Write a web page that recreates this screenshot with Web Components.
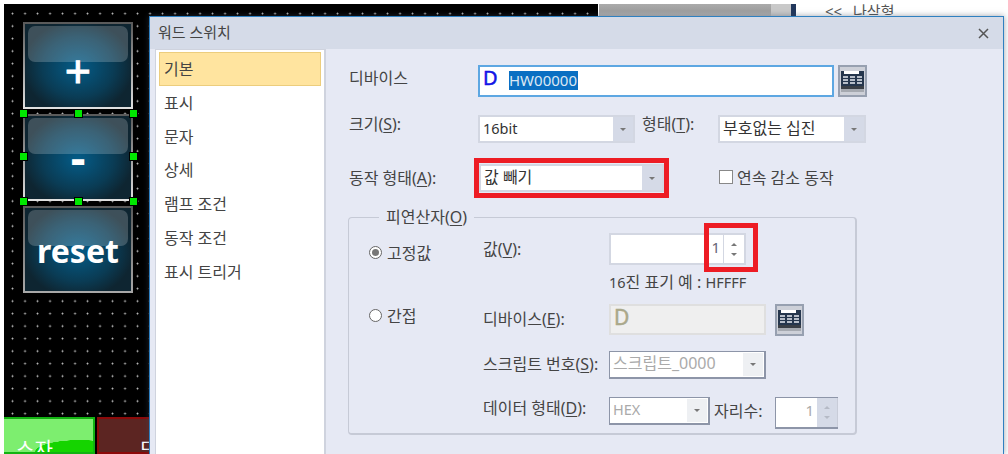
<!DOCTYPE html>
<html lang="ko">
<head>
<meta charset="utf-8">
<title>워드 스위치</title>
<style>
  html, body { margin: 0; height: 100%; background: #fff; overflow: hidden; }
  body { font: 16px "Noto Sans", "Noto Sans CJK KR", sans-serif; color: #444; }
</style>
</head>
<body>
<hmi-desktop>
  <hmi-button slot="canvas" label="+" kind="plus"></hmi-button>
  <hmi-button slot="canvas" label="-" kind="minus" selected></hmi-button>
  <hmi-button slot="canvas" label="reset" kind="word"></hmi-button>
  <word-dialog slot="window"></word-dialog>
</hmi-desktop>

<script>
const KR = '"Noto Sans", "Noto Sans CJK KR", sans-serif';

class HmiDesktop extends HTMLElement {
  constructor() {
    super();
    this.attachShadow({mode: "open"}).innerHTML = `
    <style>
      :host { display: block; position: relative; width: 1008px; height: 454px; overflow: hidden; background: #fff; font-family: ${KR}; }
      .top { display: flex; height: 454px; padding-top: 4px; box-sizing: border-box; }
      .canvas {
        margin-left: 4px; width: 594px; height: 450px; position: relative; background-color: #000;
        background-image: radial-gradient(circle at center, #c8c8c8 0 .8px, transparent 1.1px);
        background-size: 12.5px 12.5px;
        background-position: 2.3px 3.4px;
      }
      .stack { display: flex; flex-direction: column; gap: 5px; padding: 18px 0 0 19px; }
      .bar { width: 172px; height: 12px; margin-left: 1px; background: linear-gradient(#aaa, #a0a0a0 60%, #bbb); }
      .bar2 { width: 20px; height: 12px; background: #c9c9c9; }
      .navy { width: 5px; height: 12px; background: #22375c; }
      .hint { margin: -1px 0 0 29px; font-size: 15px; word-spacing: 7px; line-height: 16px; height: 12px; color: #555; overflow: hidden; white-space: nowrap; }
      .sw { position: absolute; top: 413px; height: 37px; box-sizing: border-box; overflow: hidden; color: #fff; font-size: 20px; text-align: center; }
      .go { left: 0; width: 91px; border: 2px solid #12b312; border-left: 0; background: radial-gradient(ellipse 45px 12px at 85% 100%, #15d400 98%, transparent), #7dee6f; text-align: left; padding-left: 12px; }
      .stop { left: 93px; width: 53px; border: 2px solid #8c0a0a; border-right: 0; background: #5c2522; text-align: left; padding-left: 40px; }
      .sw span { display: block; margin-top: 15px; }
      ::slotted([slot=window]) { position: absolute; left: 149px; top: 16px; }
    </style>
    <div class="top">
      <div class="canvas">
        <div class="stack"><slot name="canvas"></slot></div>
        <div class="sw go"><span>스자</span></div>
        <div class="sw stop"><span>드</span></div>
      </div>
      <div class="bar"></div><div class="bar2"></div><div class="navy"></div>
      <div class="hint">&lt;&lt; 나삭형</div>
    </div>
    <slot name="window"></slot>`;
  }
}

class HmiButton extends HTMLElement {
  constructor() {
    super();
    this.attachShadow({mode: "open"});
  }
  connectedCallback() {
    const handles = this.hasAttribute("selected")
      ? ["tl","tc","tr","ml","mr","bl","bc","br"].map(p => `<i class="${p}"></i>`).join("") : "";
    this.shadowRoot.innerHTML = `
    <style>
      :host { display: block; position: relative; width: 110px; height: 87px; box-sizing: border-box; font-family: ${KR};
        border: 2px solid; border-image: linear-gradient(#5a5a5a, #8f8f8f 40%, #e0e0e0) 1;
        background: radial-gradient(ellipse 52% 56% at 50% 52%, #045c88, #0a3c55 65%, #0e2531); }
      :host([kind=word]) { border-image: linear-gradient(#5a5a5a, #a8a8a8) 1; }
      .gloss { position: absolute; left: 3px; right: 3px; top: 2px; height: 36px; border-radius: 7px; background: rgba(255,255,255,.2); }
      .txt { position: absolute; inset: 0; display: flex; align-items: center; justify-content: center; color: #fff; box-sizing: border-box; }
      :host([kind=plus]) .txt { font: 400 46px/1 "Noto Sans", sans-serif; -webkit-text-stroke: 1px #fff; padding-top: 8px; }
      :host([kind=minus]) .txt { font: 700 46px/1 "Noto Sans", sans-serif; padding-bottom: 1px; }
      :host([kind=word]) .txt { font: 700 32px/1 "Noto Sans", sans-serif; padding-top: 3px; }
      i { position: absolute; width: 7px; height: 7px; background: #00e800; border: 1px solid #000; }
      .tl,.tr,.tc { top: -7px; } .bl,.bc,.br { bottom: -7px; } .ml,.mr { top: 36px; }
      .tl,.ml,.bl { left: -6px; } .tr,.mr,.br { right: -7px; } .tc,.bc { left: 49px; }
    </style>
    <div class="gloss"></div><div class="txt">${this.getAttribute("label")}</div>${handles}`;
  }
}

class NavList extends HTMLElement {
  constructor() {
    super();
    const items = ["기본","표시","문자","상세","램프 조건","동작 조건","표시 트리거"];
    this.attachShadow({mode: "open"}).innerHTML = `
    <style>
      :host { display: block; width: 171px; margin-left: 5px; box-sizing: border-box; background: #fff;
        border: 1px solid #cfd3de; border-width: 1px 2px 0 1px; padding: 2px 3px 0 3px; flex: none; }
      div { height: 33.8px; line-height: 34px; padding-left: 5px; box-sizing: border-box; color: #444; }
      .on { background: #ffe49f; border: 1px solid #eccd7d; padding-left: 4px; line-height: 32px; }
    </style>
    ${items.map((t, i) => `<div class="${i ? "" : "on"}">${t}</div>`).join("")}`;
  }
}

class ComboBox extends HTMLElement {
  constructor() {
    super();
    this.attachShadow({mode: "open"}).innerHTML = `
    <style>
      :host { display: flex; align-items: stretch; position: relative; box-sizing: border-box; height: 28px; flex: none;
        background: #fff; border: 2px solid #d3d7e2; color: #333; padding-left: 3px; }
      :host([disabled]) { border: 1px solid #8d95a8; border-width: 1px 2px 2px 1px; color: #aaa; }
      .v { flex: 1; line-height: 23px; white-space: nowrap; overflow: hidden; }
      .a { width: 20px; background: #d5dae7; display: flex; align-items: center; justify-content: center; }
      :host([disabled]) .a { background: #eef0f3; margin: 1px; }
      .a::after { content: ""; border: 3.5px solid transparent; border-top: 3.5px solid #777; border-bottom: 0; }
      :host([marked])::after { content: ""; position: absolute; inset: -8px -7px; border: 5px solid #ed1c24; }
    </style>
    <div class="v"><slot></slot></div><div class="a"></div>`;
  }
}

class SpinBox extends HTMLElement {
  constructor() {
    super();
    this.attachShadow({mode: "open"}).innerHTML = `
    <style>
      :host { display: flex; position: relative; box-sizing: border-box; height: 32px; flex: none; background: #fff; border: 2px solid #d3d7e2; color: #667; font-size: 15px; }
      :host([disabled]) { border: 1px solid #8d95a8; border-width: 1px 0 2px 1px; color: #aaa; }
      .v { flex: 1; text-align: right; padding-right: 3px; line-height: 24px; }
      .s { width: 21px; border-left: 1px solid #d3d7e2; display: flex; flex-direction: column; align-items: center; justify-content: space-around; padding: 4px 0; box-sizing: border-box; }
      :host([disabled]) .s { background: #d5dae7; border-left: 0; border-right: 1px solid #c8ccd8; }
      .u { border: 3.5px solid transparent; border-bottom: 3.5px solid #777; border-top: 0; }
      .d { border: 3.5px solid transparent; border-top: 3.5px solid #777; border-bottom: 0; }
      :host([disabled]) .u { border-bottom-color: #b5bac6; }
      :host([disabled]) .d { border-top-color: #b5bac6; }
      :host([marked])::after { content: ""; position: absolute; left: 93px; right: -14px; top: -12px; bottom: -9px; border: 5px solid #ed1c24; }
    </style>
    <div class="v"><slot></slot></div><div class="s"><i class="u"></i><i class="d"></i></div>`;
  }
}

class DeviceField extends HTMLElement {
  constructor() {
    super();
    this.attachShadow({mode: "open"}).innerHTML = `
    <style>
      :host { display: flex; align-items: center; box-sizing: border-box; height: 32px; background: #fff; border: 2px solid #5da7e2; flex: none; padding-left: 3px; color: #333; }
      :host([disabled]) { background: #efefef; border-color: #dfdfdf; height: 31px; }
      b { font: 400 20px/1 "Noto Sans", sans-serif; -webkit-text-stroke: .5px currentColor; color: #1414e6; width: 26px; margin-top: -6px; }
      :host([disabled]) b { color: #aaa88a; font-size: 21px; margin-top: -5px; }
      ::slotted(span) { background: #0a6fc2; color: #dbe8f4; line-height: 19px; font-size: 15px; padding-right: 1px; margin-top: -2px; }
    </style>
    <b>D</b><slot></slot>`;
  }
}

class CalcButton extends HTMLElement {
  constructor() {
    super();
    this.attachShadow({mode: "open"}).innerHTML = `
    <style>
      :host { display: flex; align-items: center; justify-content: center; box-sizing: border-box; width: 29px; height: 32px; flex: none;
        background: #cdd0d8; border: 2px solid #97a0b0; }
      svg { display: block; }
    </style>
    <svg width="23" height="24" viewBox="0 0 23 24">
      <rect x="0" y="2" width="23" height="15" fill="#25364d"/>
      <rect x="3" y="2" width="15" height="3" fill="#fff"/>
      <path d="M2 8h5M9 8h5M16 8h5M2 11h5M9 11h5M16 11h5M2 14h5M9 14h5M16 14h5" stroke="#e8ecf2" stroke-width="1.5"/>
      <rect x="0" y="17" width="23" height="3" fill="#3a3f46"/>
      <rect x="0" y="20" width="23" height="3" fill="#a5a9b0"/>
    </svg>`;
  }
}

class CheckField extends HTMLElement {
  constructor() {
    super();
    this.attachShadow({mode: "open"}).innerHTML = `
    <style>
      :host { display: flex; align-items: center; gap: 4px; white-space: nowrap; }
      i { width: 12px; height: 12px; background: #fff; border: 1px solid #888; }
    </style>
    <i></i><slot></slot>`;
  }
}

class RadioField extends HTMLElement {
  constructor() {
    super();
    this.attachShadow({mode: "open"}).innerHTML = `
    <style>
      :host { display: flex; align-items: center; gap: 5px; white-space: nowrap; }
      i { width: 11px; height: 11px; border-radius: 50%; background: #fff; border: 1px solid #666; display: flex; align-items: center; justify-content: center; }
      :host([checked]) i::after { content: ""; width: 7px; height: 7px; border-radius: 50%; background: #777; }
    </style>
    <i></i><slot></slot>`;
  }
}

class OperandGroup extends HTMLElement {
  constructor() {
    super();
    this.attachShadow({mode: "open"}).innerHTML = `
    <style>
      :host { display: block; width: 509px; height: 228px; margin-top: 15px; }
      fieldset { margin: 0; padding: 6px 0 0 20px; height: 100%; box-sizing: border-box; border: 1px solid #c6cad6; border-width: 1px 2px 2px 1px; border-radius: 4px; }
      legend { margin-left: 10px; padding: 0 7px; height: 20px; line-height: 20px; }
      .grid { display: grid; grid-template-columns: 114px 126px 1fr; grid-template-rows: 32px 39px 47px 46px 32px; align-items: start; }
      .l { line-height: 30px; white-space: nowrap; }
      .hint { padding-top: 7px; line-height: 20px; white-space: nowrap; }
      .hint span { font-size: 14.5px; }
      .r { display: flex; align-items: flex-start; gap: 9px; }
      u { text-underline-offset: 2px; }
      radio-field { height: 32px; margin-top: 3px; }
    </style>
    <fieldset>
      <legend>피연산자(<u>O</u>)</legend>
      <div class="grid">
        <radio-field checked>고정값</radio-field>
        <div class="l" style="line-height:32px">값(<u>V</u>):</div>
        <div><spin-box marked style="width:137px">1</spin-box></div>

        <div></div><div></div>
        <div class="hint"><span>16</span>진 표기 예 : <span>HFFFF</span></div>

        <radio-field style="margin-top:-5px">간접</radio-field>
        <div class="l">디바이스(<u>E</u>):</div>
        <div class="r"><device-field disabled style="width:157px"></device-field><calc-button></calc-button></div>

        <div></div>
        <div class="l" style="line-height:26px">스크립트 번호(<u>S</u>):</div>
        <div><combo-box disabled style="width:157px">스크립트_0000</combo-box></div>

        <div></div>
        <div class="l" style="line-height:22px">데이터 형태(<u>D</u>):</div>
        <div class="r" style="gap:4px">
          <combo-box disabled style="width:101px"><span style="font-size:14.5px">HEX</span></combo-box>
          <span style="line-height:28px;width:57px;white-space:nowrap">자리수:</span>
          <spin-box disabled style="width:63px">1</spin-box>
        </div>
      </div>
    </fieldset>`;
  }
}

class WordDialog extends HTMLElement {
  constructor() {
    super();
    this.attachShadow({mode: "open"}).innerHTML = `
    <style>
      :host { display: flex; flex-direction: column; width: 855px; height: 438px; box-sizing: border-box; background: #e6e9f4;
        border: 1px solid #2f80c0; border-bottom: 0; box-shadow: 0 0 6px rgba(60,70,90,.5); color: #444; font-size: 16px; font-family: ${KR}; }
      .title { display: flex; align-items: center; justify-content: space-between; height: 32px; flex: none; background: #d5dbe8; padding: 0 14px 0 8px; font-size: 15px; }
      .title span { padding-bottom: 4px; }
      .body { display: flex; flex: 1; min-height: 0; }
      .panel { flex: 1; padding: 16px 0 0 22px; }
      .row { display: flex; align-items: center; }
      .lab { width: 130px; flex: none; white-space: nowrap; box-sizing: border-box; padding-left: 1px; }
      u { text-underline-offset: 2px; }
      .r2 { margin-top: 18px; height: 28px; }
      .r3 { margin-top: 21px; height: 28px; }
      .up6 { padding-bottom: 8px; }
      .up8 { padding-bottom: 13px; }
    </style>
    <div class="title"><span>워드 스위치</span>
      <svg width="11" height="11" viewBox="0 0 11 11"><path d="M1 1l9 9M10 1l-9 9" stroke="#555" stroke-width="1.5"/></svg>
    </div>
    <div class="body">
      <nav-list></nav-list>
      <div class="panel">
        <div class="row">
          <div class="lab up6">디바이스</div>
          <device-field style="width:356px"><span>HW00000</span></device-field>
          <calc-button style="margin-left:4px"></calc-button>
        </div>
        <div class="row r2">
          <div class="lab up8">크기(<u>S</u>):</div>
          <combo-box style="width:157px"><span style="font-size:14.5px">16bit</span></combo-box>
          <div class="up8" style="width:83px;padding-left:7px;box-sizing:border-box;white-space:nowrap">형태(<u>T</u>):</div>
          <combo-box style="width:148px">부호없는 십진</combo-box>
        </div>
        <div class="row r3">
          <div class="lab" style="padding-bottom:2px">동작 형태(<u>A</u>):</div>
          <combo-box marked style="width:185px;margin-left:1px">값 빼기</combo-box>
          <check-field style="margin-left:55px;padding-bottom:2px">연속 감소 동작</check-field>
        </div>
        <operand-group></operand-group>
      </div>
    </div>`;
  }
}

customElements.define("hmi-desktop", HmiDesktop);
customElements.define("hmi-button", HmiButton);
customElements.define("nav-list", NavList);
customElements.define("combo-box", ComboBox);
customElements.define("spin-box", SpinBox);
customElements.define("device-field", DeviceField);
customElements.define("calc-button", CalcButton);
customElements.define("check-field", CheckField);
customElements.define("radio-field", RadioField);
customElements.define("operand-group", OperandGroup);
customElements.define("word-dialog", WordDialog);
</script>
</body>
</html>
